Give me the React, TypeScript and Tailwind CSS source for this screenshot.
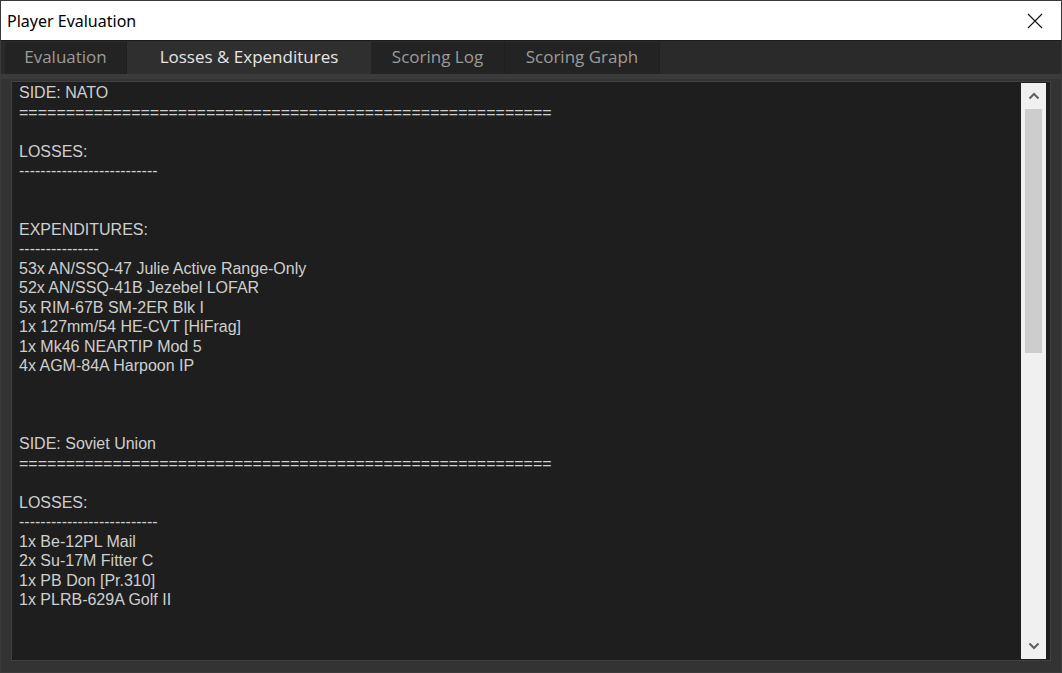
import React from 'react';

const tabs = [
  { label: 'Evaluation', w: 'w-[122px]' },
  { label: 'Losses & Expenditures', w: 'w-[244px]', active: true },
  { label: 'Scoring Log', w: 'w-[134px]' },
  { label: 'Scoring Graph', w: 'w-[155px]' },
];

const lines = [
  'SIDE: NATO',
  '='.repeat(57),
  '',
  'LOSSES:',
  '-'.repeat(26),
  '',
  '',
  'EXPENDITURES:',
  '-'.repeat(15),
  '53x AN/SSQ-47 Julie Active Range-Only',
  '52x AN/SSQ-41B Jezebel LOFAR',
  '5x RIM-67B SM-2ER Blk I',
  '1x 127mm/54 HE-CVT [HiFrag]',
  '1x Mk46 NEARTIP Mod 5',
  '4x AGM-84A Harpoon IP',
  '',
  '',
  '',
  'SIDE: Soviet Union',
  '='.repeat(57),
  '',
  'LOSSES:',
  '-'.repeat(26),
  '1x Be-12PL Mail',
  '2x Su-17M Fitter C',
  '1x PB Don [Pr.310]',
  '1x PLRB-629A Golf II',
];

export default function App() {
  return (
    <div className="w-[1062px] h-[673px] flex flex-col bg-[#2b2b2b] border border-[#3a3a3a] overflow-hidden">
      {/* Title bar */}
      <div className="h-[39px] shrink-0 bg-white flex items-center justify-between pl-[6px] pr-[18px]">
        <span className="text-[16px] text-black font-['Noto_Sans',sans-serif]">Player Evaluation</span>
        <svg width="16" height="16" viewBox="0 0 16 16" className="text-[#111]">
          <path d="M1 1 L15 15 M15 1 L1 15" stroke="currentColor" strokeWidth="1.1" fill="none" />
        </svg>
      </div>

      {/* Tabs */}
      <div className="h-[34px] shrink-0 flex items-end pl-[4px] bg-[#2a2a2a] border-t border-[#1c1c1c]">
        {tabs.map((t) => (
          <div
            key={t.label}
            className={`${t.w} h-[32px] flex items-center justify-center pb-[2px] font-['Open_Sans',sans-serif] text-[17px] ${
              t.active
                ? 'bg-[#2f2f2f] text-[#e6e6e6]'
                : 'bg-[#232323] text-[#9c9c9c] border-r border-[#1f1f1f]'
            }`}
          >
            {t.label}
          </div>
        ))}
      </div>

      {/* Panel */}
      <div className="flex-1 flex flex-col bg-[#333333] border-t-[5px] border-[#3b3b3b] px-[10px] pt-[2px] pb-[11px]">
        <div className="flex-1 flex bg-[#1e1e1e] border border-[#414141] min-h-0">
          <div className="flex-1 pl-[7px] pt-[1px] font-['Liberation_Sans',Arial,sans-serif] text-[16px] leading-[19.5px] text-[#cfcfcf] whitespace-pre overflow-hidden">
            {lines.map((l, i) => (
              <div key={i} className="h-[19.5px]">{l}</div>
            ))}
          </div>
          {/* Scrollbar */}
          <div className="w-[25px] shrink-0 my-[1px] mr-[4px] bg-[#f0f0f0] flex flex-col items-center">
            <div className="h-[26px] w-full flex items-center justify-center">
              <svg width="12" height="8" viewBox="0 0 12 8">
                <path d="M1.5 6.5 L6 2 L10.5 6.5" stroke="#606060" strokeWidth="2" fill="none" />
              </svg>
            </div>
            <div className="w-[17px] h-[244px] bg-[#cdcdcd]" />
            <div className="flex-1" />
            <div className="h-[26px] w-full flex items-center justify-center">
              <svg width="12" height="8" viewBox="0 0 12 8">
                <path d="M1.5 1.5 L6 6 L10.5 1.5" stroke="#606060" strokeWidth="2" fill="none" />
              </svg>
            </div>
          </div>
        </div>
      </div>
    </div>
  );
}
